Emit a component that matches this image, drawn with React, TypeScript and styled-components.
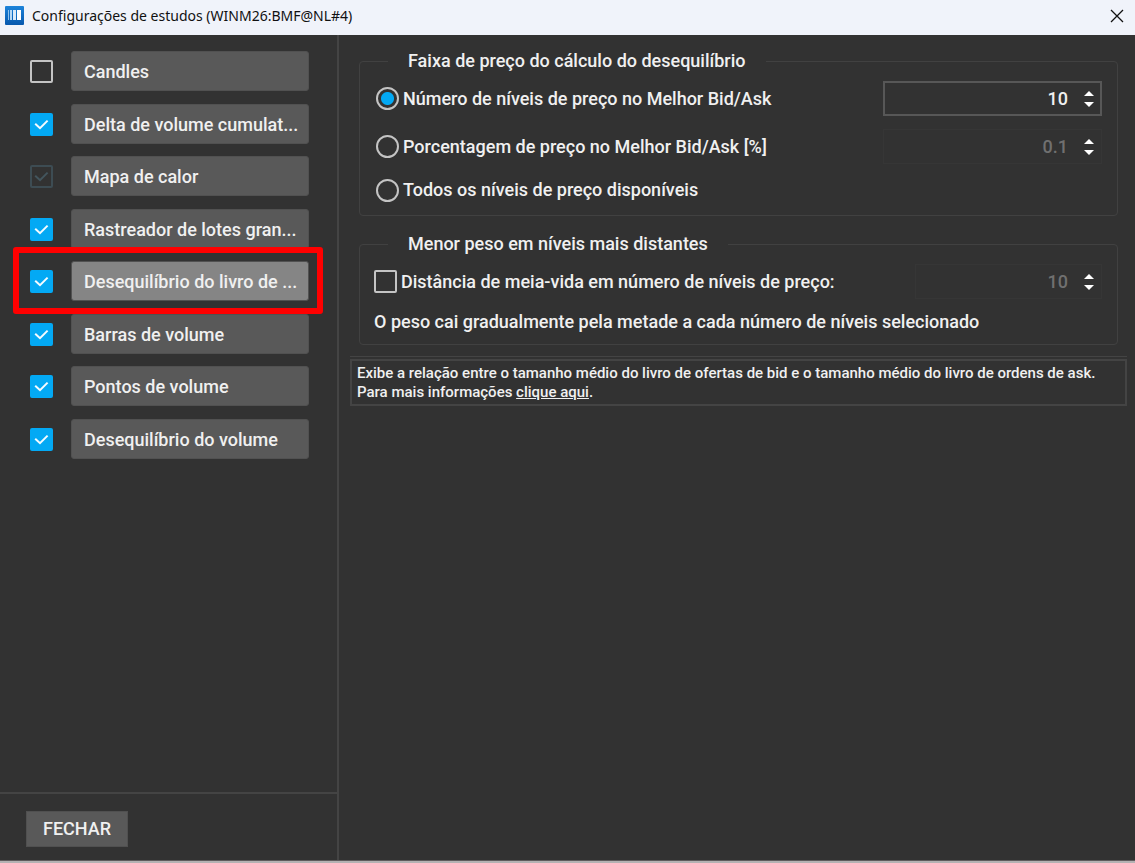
import React, { useState } from "react";
import styled, { createGlobalStyle, css } from "styled-components";

const colors = {
  background: "#323232",
  line: "#444444",
  groupLine: "#414141",
  button: "#595959",
  selected: "#858585",
  accent: "#03a9f4",
  text: "#f0f0f0",
  outline: "#c4c4c4",
};

const GlobalStyle = createGlobalStyle`
  *, *::before, *::after { box-sizing: border-box; }
  body {
    margin: 0;
    background: ${colors.background};
    color: ${colors.text};
    font: 500 18px/24px Roboto, "Liberation Sans", sans-serif;
  }
  button, input { font: inherit; color: inherit; }
`;

const Window = styled.div`
  display: flex;
  flex-direction: column;
  min-height: 100vh;
  border-bottom: 2px solid #b4b2b3;
`;

const TitleBar = styled.header`
  display: flex;
  align-items: center;
  height: 35px;
  padding: 0 8px 4px 5px;
  gap: 8px;
  background: #f0f3fa;
  color: #111111;
`;

const Title = styled.h1`
  flex: 1;
  margin: 0;
  font: 400 14px/20px "Noto Sans", "Open Sans", sans-serif;
`;

const CloseButton = styled.button`
  display: flex;
  padding: 3px;
  border: 0;
  background: none;
`;

const Body = styled.div`
  display: flex;
  flex: 1;
  border-bottom: 1px solid #5f5c5d;
`;

const Sidebar = styled.aside`
  display: flex;
  flex-direction: column;
  flex: 0 0 339px;
  min-width: 0;
  border-right: 2px solid ${colors.line};
`;

const StudyList = styled.ul`
  display: grid;
  grid-template-columns: minmax(0, 1fr);
  grid-template-rows: repeat(4, 41px 40px);
  row-gap: 12px;
  flex: 1;
  align-content: start;
  margin: 0;
  padding: 16px 28px 16px 30px;
  list-style: none;
`;

const StudyRow = styled.li`
  position: relative;
  display: flex;
  align-items: center;
  gap: 18px;
  height: 40px;
`;

const Highlight = styled.span`
  position: absolute;
  z-index: 1;
  inset: -14px -14px -13px -17px;
  border: 6px solid #ff0000;
  border-radius: 3px;
  pointer-events: none;
`;

const StudyButton = styled.button<{ $selected?: boolean }>`
  flex: 1;
  min-width: 0;
  height: 40px;
  padding: 2px 8px 0 12px;
  border: 1px solid #515151;
  border-radius: 3px;
  background: ${(p) => (p.$selected ? colors.selected : colors.button)};
  text-align: left;
  white-space: nowrap;
`;

const CheckFrame = styled.span`
  display: grid;
  flex: none;
  width: 23px;
  height: 23px;

  > * { grid-area: 1 / 1; }
  > svg { pointer-events: none; }
`;

const CheckInput = styled.input`
  appearance: none;
  width: 23px;
  height: 23px;
  margin: 0;
  border: 2px solid ${colors.outline};
  border-radius: 2px;

  &:checked {
    border-color: ${colors.accent};
    background: ${colors.accent};
  }
  &:disabled {
    border-color: #3d4c53;
    background: none;
  }
`;

const Footer = styled.footer`
  padding: 17px 26px 13px;
  border-top: 2px solid ${colors.line};
`;

const FooterButton = styled.button`
  height: 36px;
  padding: 0 16px;
  border: 1px solid #505050;
  background: ${colors.button};
`;

const Panel = styled.main`
  flex: 1;
  min-width: 0;
  padding: 14px 8px 14px 11px;
`;

const Groups = styled.div`
  display: flex;
  flex-direction: column;
  gap: 16px;
  padding: 0 9px;
`;

const Group = styled.fieldset`
  min-width: 0;
  margin: 0;
  padding: 0;
  border: 1px solid ${colors.groupLine};
  border-radius: 4px;
`;

const Legend = styled.legend`
  margin-left: 28px;
  padding: 0 20px;
`;

const GroupBody = styled.div<{ $compact?: boolean }>`
  display: flex;
  flex-direction: column;
  ${(p) =>
    p.$compact
      ? css`
          gap: 11px;
          padding: 8px 15px 10px 14px;
        `
      : css`
          gap: 13px;
          padding: 8px 15px 12px 16px;
        `}
`;

const Row = styled.div`
  display: flex;
  align-items: center;
  justify-content: space-between;
  min-height: 26px;
`;

const OptionLabel = styled.label`
  display: flex;
  align-items: center;
  gap: 4px;
`;

const Radio = styled.input`
  appearance: none;
  width: 23px;
  height: 23px;
  margin: 0;
  border: 2px solid ${colors.outline};
  border-radius: 50%;

  &:checked {
    background: radial-gradient(circle, ${colors.accent} 6px, transparent 7px);
  }
`;

const Note = styled.p`
  margin: 0;
`;

const SpinFrame = styled.div<{ $disabled?: boolean; $narrow?: boolean }>`
  display: flex;
  flex: none;
  width: ${(p) => (p.$narrow ? 187 : 219)}px;
  height: 35px;
  border: ${(p) => (p.$disabled ? "1px solid #363636" : "2px solid #575757")};
  padding: ${(p) => (p.$disabled ? 1 : 0)}px;
`;

const SpinInput = styled.input`
  appearance: textfield;
  flex: 1;
  min-width: 0;
  padding: 0 10px 0 8px;
  border: 0;
  outline: 0;
  background: none;
  text-align: right;

  &::-webkit-inner-spin-button { appearance: none; margin: 0; }
  &:disabled { color: #707070; }
`;

const SpinButtons = styled.div`
  display: flex;
  flex-direction: column;
  justify-content: center;
  gap: 6px;
  width: 22px;
`;

const StepButton = styled.button`
  display: flex;
  justify-content: center;
  padding: 0;
  border: 0;
  background: none;
`;

const Divider = styled.hr`
  margin: 11px 0 2px;
  border: 0;
  border-top: 1px solid ${colors.line};
`;

const Info = styled.p`
  margin: 0;
  padding: 3px 5px 2px;
  border: 2px solid ${colors.line};
  font-size: 15px;
  line-height: 19px;
`;

const InfoLink = styled.a`
  color: inherit;
  text-decoration: underline;
`;

function AppIcon() {
  return (
    <svg width="19" height="19" viewBox="0 0 19 19" aria-hidden="true">
      <defs>
        <linearGradient id="tile" x1="0" y1="0" x2="0" y2="1">
          <stop offset="0" stopColor="#1c83da" />
          <stop offset="1" stopColor="#0758ad" />
        </linearGradient>
      </defs>
      <rect width="19" height="19" rx="1" fill="url(#tile)" />
      <rect x="3" y="4" width="1" height="10" fill="#8fc2ee" />
      <rect x="5" y="4" width="2" height="10" fill="#b9daf5" />
      <rect x="8" y="4" width="3" height="10" fill="#dcecfa" />
      <rect x="12" y="4" width="4" height="10" fill="#ffffff" />
    </svg>
  );
}

type CheckProps = {
  id?: string;
  label?: string;
  checked: boolean;
  disabled?: boolean;
  onChange?: () => void;
};

function Check({ id, label, checked, disabled, onChange }: CheckProps) {
  return (
    <CheckFrame>
      <CheckInput
        type="checkbox"
        id={id}
        aria-label={label}
        checked={checked}
        disabled={disabled}
        onChange={onChange}
      />
      {checked && (
        <svg width="23" height="23" viewBox="0 0 23 23" aria-hidden="true">
          <path
            d="M5.2 10.8 L10 15.2 L17.6 7.6"
            fill="none"
            stroke={disabled ? "#43555d" : "#f4fbff"}
            strokeWidth="2"
          />
        </svg>
      )}
    </CheckFrame>
  );
}

type SpinProps = {
  label: string;
  initial: number;
  step?: number;
  disabled?: boolean;
  narrow?: boolean;
};

function Spin({ label, initial, step = 1, disabled, narrow }: SpinProps) {
  const [value, setValue] = useState(initial);
  const move = (n: number) => setValue((v) => Number((v + n * step).toFixed(1)));
  return (
    <SpinFrame $disabled={disabled} $narrow={narrow}>
      <SpinInput
        type="number"
        aria-label={label}
        step={step}
        value={value}
        disabled={disabled}
        onChange={(e) => setValue(Number(e.target.value))}
      />
      <SpinButtons>
        <StepButton type="button" aria-label="Aumentar" disabled={disabled} onClick={() => move(1)}>
          <svg width="10" height="5" viewBox="0 0 10 5">
            <path d="M5 0 L10 5 H0 Z" fill="#ffffff" />
          </svg>
        </StepButton>
        <StepButton type="button" aria-label="Diminuir" disabled={disabled} onClick={() => move(-1)}>
          <svg width="10" height="5" viewBox="0 0 10 5">
            <path d="M0 0 H10 L5 5 Z" fill="#ffffff" />
          </svg>
        </StepButton>
      </SpinButtons>
    </SpinFrame>
  );
}

const initialStudies = [
  { name: "Candles", checked: false },
  { name: "Delta de volume cumulat...", checked: true },
  { name: "Mapa de calor", checked: true, disabled: true },
  { name: "Rastreador de lotes gran...", checked: true },
  { name: "Desequilíbrio do livro de ...", checked: true },
  { name: "Barras de volume", checked: true },
  { name: "Pontos de volume", checked: true },
  { name: "Desequilíbrio do volume", checked: true },
];

export default function App() {
  const [studies, setStudies] = useState(initialStudies);
  const [selected, setSelected] = useState(4);
  const [range, setRange] = useState("levels");
  const [halfLife, setHalfLife] = useState(false);

  const toggle = (index: number) =>
    setStudies((list) => list.map((s, i) => (i === index ? { ...s, checked: !s.checked } : s)));

  return (
    <Window>
      <GlobalStyle />
      <TitleBar>
        <AppIcon />
        <Title>Configurações de estudos (WINM26:BMF@NL#4)</Title>
        <CloseButton type="button" aria-label="Fechar janela">
          <svg width="14" height="14" viewBox="0 0 14 14">
            <path d="M1 1 L13 13 M13 1 L1 13" stroke="#111111" strokeWidth="1.3" fill="none" />
          </svg>
        </CloseButton>
      </TitleBar>
      <Body>
        <Sidebar>
          <StudyList>
            {studies.map((study, i) => (
              <StudyRow key={study.name}>
                <Check
                  label={study.name}
                  checked={study.checked}
                  disabled={study.disabled}
                  onChange={() => toggle(i)}
                />
                <StudyButton type="button" $selected={i === selected} onClick={() => setSelected(i)}>
                  {study.name}
                </StudyButton>
                {i === selected && <Highlight />}
              </StudyRow>
            ))}
          </StudyList>
          <Footer>
            <FooterButton type="button">FECHAR</FooterButton>
          </Footer>
        </Sidebar>
        <Panel>
          <Groups>
            <Group>
              <Legend>Faixa de preço do cálculo do desequilíbrio</Legend>
              <GroupBody>
                <Row>
                  <OptionLabel>
                    <Radio type="radio" name="range" checked={range === "levels"} onChange={() => setRange("levels")} />
                    Número de níveis de preço no Melhor Bid/Ask
                  </OptionLabel>
                  <Spin label="Número de níveis" initial={10} />
                </Row>
                <Row>
                  <OptionLabel>
                    <Radio type="radio" name="range" checked={range === "percent"} onChange={() => setRange("percent")} />
                    Porcentagem de preço no Melhor Bid/Ask [%]
                  </OptionLabel>
                  <Spin label="Porcentagem de preço" initial={0.1} step={0.1} disabled />
                </Row>
                <Row>
                  <OptionLabel>
                    <Radio type="radio" name="range" checked={range === "all"} onChange={() => setRange("all")} />
                    Todos os níveis de preço disponíveis
                  </OptionLabel>
                </Row>
              </GroupBody>
            </Group>
            <Group>
              <Legend>Menor peso em níveis mais distantes</Legend>
              <GroupBody $compact>
                <Row>
                  <OptionLabel htmlFor="half-life">
                    <Check id="half-life" checked={halfLife} onChange={() => setHalfLife(!halfLife)} />
                    Distância de meia-vida em número de níveis de preço:
                  </OptionLabel>
                  <Spin label="Distância de meia-vida" initial={10} disabled narrow />
                </Row>
                <Note>O peso cai gradualmente pela metade a cada número de níveis selecionado</Note>
              </GroupBody>
            </Group>
          </Groups>
          <Divider />
          <Info>
            Exibe a relação entre o tamanho médio do livro de ofertas de bid e o tamanho médio do livro de ordens de ask.
            <br />
            Para mais informações <InfoLink href="#info">clique aqui</InfoLink>.
          </Info>
        </Panel>
      </Body>
    </Window>
  );
}
